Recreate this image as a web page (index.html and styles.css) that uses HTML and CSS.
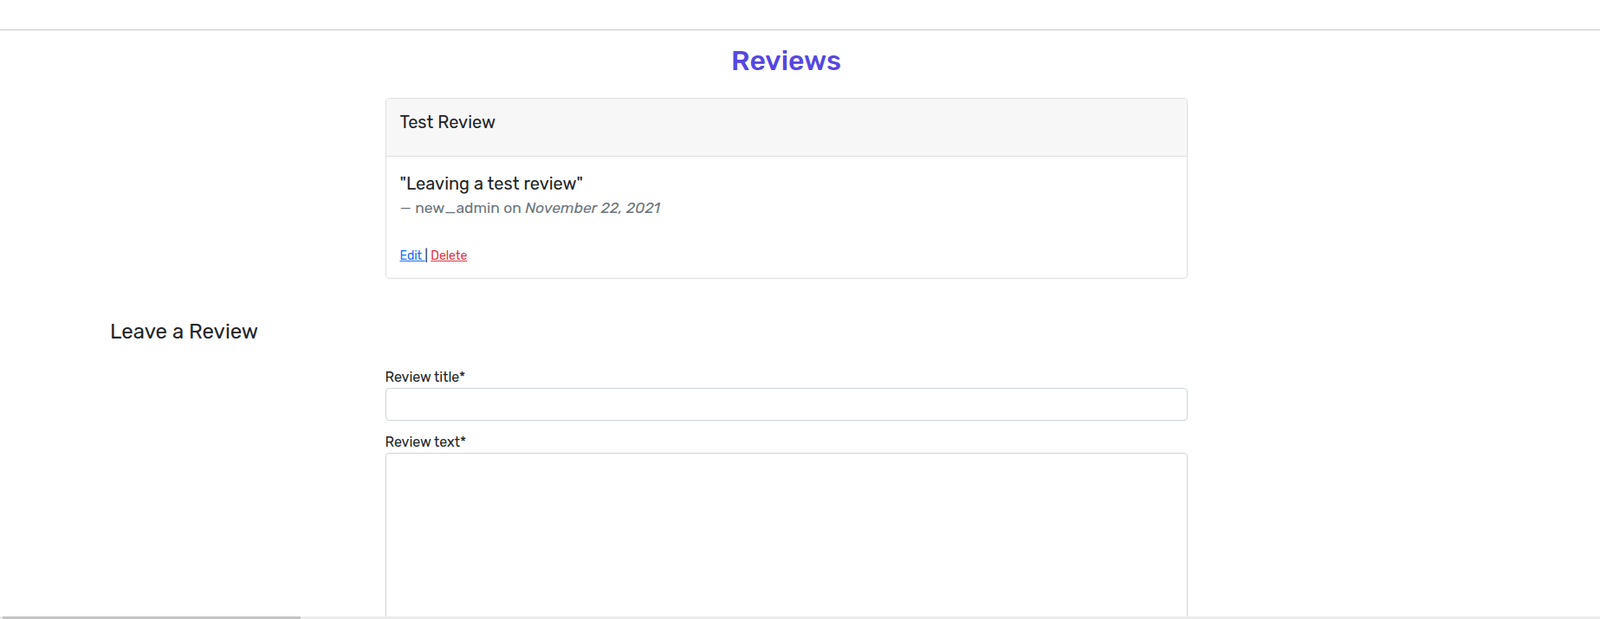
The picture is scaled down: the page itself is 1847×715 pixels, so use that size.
FILE: index.html
```html
<!DOCTYPE html>
<html lang="en">
<head>
<meta charset="utf-8">
<title>Reviews</title>
<link rel="stylesheet" href="styles.css">
</head>
<body>
<header class="topbar"></header>
<main class="page">
  <h1 class="title">Reviews</h1>
  <section class="reviews">
    <article class="card">
      <div class="card-header"><h5 class="card-title">Test Review</h5></div>
      <div class="card-body">
        <blockquote class="quote">
          <p class="quote-text">"Leaving a test review"</p>
          <footer class="quote-footer">— new_admin on <cite class="quote-date">November 22, 2021</cite></footer>
        </blockquote>
        <div class="actions"><a class="link-edit" href="#">Edit </a><span class="sep">|</span> <a class="link-delete" href="#">Delete</a></div>
      </div>
    </article>
  </section>
  <h4 class="leave">Leave a Review</h4>
  <form class="review-form">
    <label class="field-label" for="title">Review title*</label>
    <input class="field-input" id="title" type="text">
    <label class="field-label second" for="text">Review text*</label>
    <textarea class="field-textarea" id="text"></textarea>
  </form>
</main>
<div class="hscroll"><div class="hscroll-thumb"></div></div>
</body>
</html>
```
FILE: styles.css
```css
* { box-sizing: border-box; }
html, body { margin: 0; padding: 0; }
body {
  font-family: Rubik, Inter, "Noto Sans", sans-serif;
  font-weight: 400;
  color: #212529;
  background: #fff;
  overflow: hidden;
  height: 715px;
}
.topbar {
  height: 35px;
  border-bottom: 1px solid #c6c6c6;
}
.page {
  width: 1815px;
}
.title {
  margin: 15px 0 23px;
  font-size: 32px;
  line-height: 40px;
  font-weight: 500;
  text-align: center;
  color: #5747e0;
}
.card {
  width: 926px;
  margin: 0 auto;
  border: 1px solid #dfdfdf;
  border-radius: 4px;
  overflow: hidden;
}
.card-header {
  background: #f7f7f7;
  border-bottom: 1px solid #dfdfdf;
  padding: 15px 16px 27px;
}
.card-title {
  margin: 0;
  font-size: 20px;
  line-height: 24px;
  font-weight: 400;
}
.card-body {
  padding: 16px 16px 15px;
}
.quote { margin: 0; }
.quote-text {
  margin: 0;
  font-size: 20px;
  line-height: 30px;
}
.quote-footer {
  font-size: 17.5px;
  line-height: 26px;
  color: #6c757d;
}
.quote-date { font-style: italic; }
.actions {
  margin-top: 32px;
  font-size: 14px;
  line-height: 21px;
}
.link-edit { color: #0d6efd; }
.link-delete { color: #dc3545; }
.sep { color: #212529; }
.leave {
  margin: 47px 0 0 127px;
  font-size: 24px;
  line-height: 29px;
  font-weight: 400;
}
.review-form {
  width: 926px;
  margin: 26px auto 0;
  display: flex;
  flex-direction: column;
}
.field-label {
  font-size: 16px;
  line-height: 24px;
  color: #212529;
}
.field-label.second { margin-top: 13px; }
.field-input {
  height: 38px;
  border: 1px solid #ced4da;
  border-radius: 4px;
  font: inherit;
}
.field-textarea {
  height: 300px;
  border: 1px solid #ced4da;
  border-radius: 4px;
  font: inherit;
  resize: none;
}
.hscroll {
  position: fixed;
  left: 0;
  right: 0;
  bottom: 0;
  height: 3px;
  background: #ececec;
}
.hscroll-thumb {
  margin-left: 3px;
  width: 344px;
  height: 3px;
  background: #c4c4c4;
}
```
